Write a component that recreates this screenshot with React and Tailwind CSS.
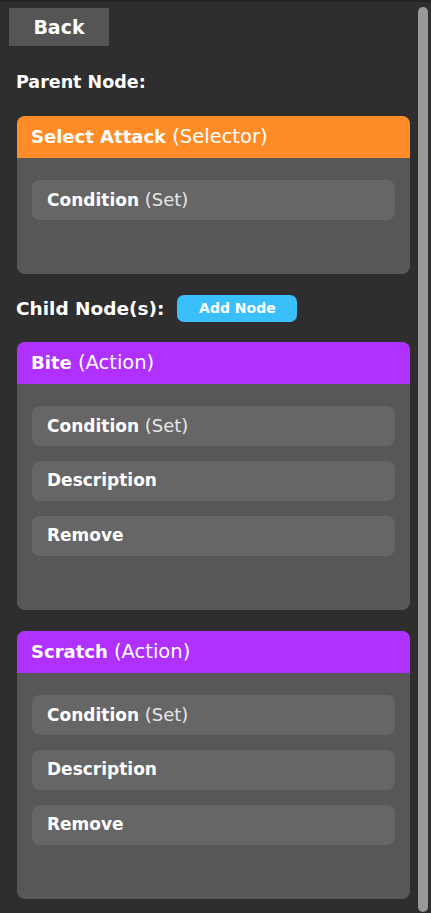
function Row({ title, sub }) {
  return (
    <div className="h-10 rounded-lg bg-[#666666] px-[15px] flex items-center text-white whitespace-pre">
      <span className="text-[17px]">
        <span className="font-bold">{title}</span>
        {sub && <span className="font-normal text-[18px] text-[#e6e6e6]"> ({sub})</span>}
      </span>
    </div>
  );
}

function NodeCard({ color, name, kind, rows }) {
  return (
    <div className="rounded-lg overflow-hidden bg-[#575757]">
      <div className={`h-[42px] px-[14px] flex items-center text-white whitespace-pre ${color}`}>
        <span className="text-[18px]">
          <span className="font-bold">{name}</span>
          <span className="font-normal text-[19.5px]"> ({kind})</span>
        </span>
      </div>
      <div className="pt-[22px] pb-[54px] px-[15px] flex flex-col gap-[15px]">
        {rows.map((r) => (
          <Row key={r.title} title={r.title} sub={r.sub} />
        ))}
      </div>
    </div>
  );
}

export default function App() {
  const actionRows = [
    { title: "Condition", sub: "Set" },
    { title: "Description" },
    { title: "Remove" },
  ];

  return (
    <div
      className="h-[913px] w-[431px] bg-[#2e2e2e] flex border-t-2 border-[#242424] overflow-hidden"
      style={{ fontFamily: "'DejaVu Sans', 'Noto Sans', sans-serif" }}
    >
      <div className="flex-1 flex flex-col">
        <div className="pl-[9px] pt-[6px]">
          <button className="w-[100px] h-[38px] bg-[#555555] text-white font-bold text-[19px]">
            Back
          </button>
        </div>

        <div className="pl-4 mt-[24px] text-white font-bold text-[17.5px] leading-6">
          Parent Node:
        </div>

        <div className="pl-[17px] pr-[6px] mt-[22px]">
          <NodeCard
            color="bg-[#ff8c26]"
            name="Select Attack"
            kind="Selector"
            rows={[{ title: "Condition", sub: "Set" }]}
          />
        </div>

        <div className="pl-4 mt-[21px] flex items-center h-[27px]">
          <span className="text-white font-bold text-[18.5px]">Child Node(s):</span>
          <button className="ml-[13px] w-[120px] h-[27px] rounded-[7px] bg-[#3bbffa] text-white font-bold text-[14px]">
            Add Node
          </button>
        </div>

        <div className="pl-[17px] pr-[6px] mt-[20px] flex flex-col gap-[21px]">
          <NodeCard color="bg-[#b030ff]" name="Bite" kind="Action" rows={actionRows} />
          <NodeCard color="bg-[#b030ff]" name="Scratch" kind="Action" rows={actionRows} />
        </div>
      </div>

      <div className="w-[15px] pt-[5px] pb-[1px] pl-[2px] pr-[3px] flex">
        <div className="flex-1 rounded-full bg-[#999999]" />
      </div>
    </div>
  );
}
